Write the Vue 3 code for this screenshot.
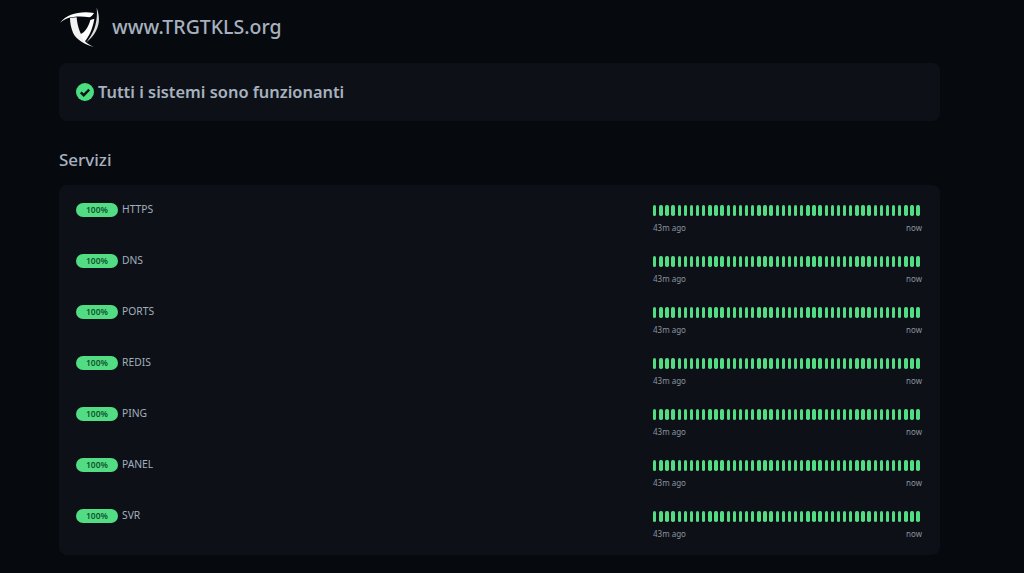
<script setup>
const services = ['HTTPS', 'DNS', 'PORTS', 'REDIS', 'PING', 'PANEL', 'SVR']
const bars = Array.from({ length: 44 }, (_, i) => i)
</script>

<template>
  <div class="page">
    <header class="brand">
      <svg class="logo" viewBox="30 15 120 120" width="40" height="40" aria-hidden="true">
        <path d="M30 62 C52 36 90 26 132 33 C128 40 124 44 118 46 C102 43 84 43 70 45 C55 46 42 52 30 62Z" fill="#fff"/>
        <path d="M60 48 L80 46 C81 66 88 92 104 116 C111 124 120 130 132 135 C104 128 78 112 69 92 C63 78 60 62 60 48Z" fill="#f2f2f2"/>
        <path d="M133 50 C128 80 118 102 103 120 C98 110 94 104 92 96 C104 92 116 74 121 54 Z" fill="#fff"/>
        <path d="M140 17 C153 50 150 88 108 122 C134 92 144 56 140 17Z" fill="#dcdcdc"/>
      </svg>
      <span class="site">www.TRGTKLS.org</span>
    </header>

    <section class="card status">
      <svg class="check" viewBox="0 0 18 18" width="18" height="18" aria-hidden="true">
        <circle cx="9" cy="9" r="9" fill="#4ade80"/>
        <path d="M4.8 9.4 L7.7 12.2 L13.2 6.6" fill="none" stroke="#0d1117" stroke-width="2.4"/>
      </svg>
      <h1>Tutti i sistemi sono funzionanti</h1>
    </section>

    <h2>Servizi</h2>

    <section class="card services">
      <div v-for="s in services" :key="s" class="row">
        <div class="label">
          <span class="pill">100%</span>
          <span class="name">{{ s }}</span>
        </div>
        <div class="uptime">
          <div class="bars"><i v-for="b in bars" :key="b"></i></div>
          <div class="times"><span>43m ago</span><span>now</span></div>
        </div>
      </div>
    </section>
  </div>
</template>

<style>
html, body { margin: 0; background: #060a0f; }
</style>

<style scoped>
.page {
  box-sizing: border-box;
  width: 1024px;
  height: 573px;
  overflow: hidden;
  padding: 7px 84px 0 59px;
  background: #060a0f;
  font-family: "Noto Sans", "Open Sans", sans-serif;
  color: #a3aebd;
}
.brand { display: flex; align-items: center; gap: 12px; height: 40px; padding-left: 1px; }
.logo { flex: none; }
.site { font-size: 19.5px; line-height: 26px; margin-top: -1px; font-weight: 500; color: #a7b1bf; }
.card { background: #0d1117; border-radius: 8px; }
.status {
  margin-top: 16px;
  height: 58px;
  display: flex;
  align-items: center;
  gap: 4px;
  padding: 0 17px 1px;
  box-sizing: border-box;
}
h1 { margin: 0; font-size: 16.4px; font-weight: 600; color: #a7b1bf; }
h2 { margin: 25px 0 12px; font-size: 17px; line-height: 27px; font-weight: 500; color: #a7b1bf; }
.services {
  box-sizing: border-box;
  height: 370px;
  padding: 18px 17px 0;
  display: flex;
  flex-direction: column;
  gap: 13px;
}
.row { display: flex; justify-content: space-between; height: 38px; }
.label { display: flex; align-items: flex-start; gap: 4px; }
.pill {
  width: 42px;
  height: 14px;
  border-radius: 7px;
  background: #52dd85;
  color: #14532d;
  font-size: 8.5px;
  font-weight: 600;
  line-height: 14px;
  text-align: center;
}
.name { font-size: 10.3px; line-height: 14px; margin-top: -1px; color: #a3aebd; }
.uptime { width: 269px; margin-right: 1px; }
.bars { display: flex; justify-content: space-between; width: 267px; margin-top: 2px; }
.bars i { display: block; width: 3.4px; height: 11px; border-radius: 1.7px; background: #52dd85; }
.times {
  display: flex;
  justify-content: space-between;
  margin-top: 6px;
  font-size: 8px;
  line-height: 11px;
  color: #8b93a0;
}
</style>
